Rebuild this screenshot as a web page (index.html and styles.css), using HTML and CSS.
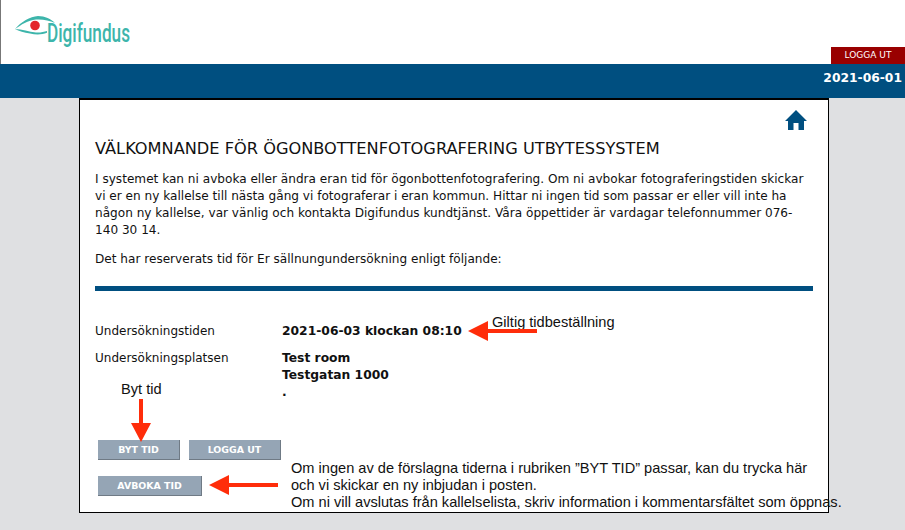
FILE: index.html
```html
<!DOCTYPE html>
<html lang="sv">
<head>
    <meta charset="UTF-8">
    <meta name="viewport" content="width=device-width, initial-scale=1.0">
    <title>Digifundus</title>
    <link rel="stylesheet" href="styles.css">
</head>
<body>
    <header class="top">
        <svg class="logo" width="180" height="50" viewBox="0 0 180 50">
            <path d="M15 29 C21 22 30 16.500 38 16 C45 16 51 19 55 23 C49 20.500 43 19 36 19.500 C28 20 21 25 15 29 Z" fill="#3db5ab"/>
            <path d="M15 29 C22 29 29 32 36 32.500 C40 32.800 44 32 47 31 L47 32.800 C42 34.800 36 35 30 33.500 C24 32.500 19 31 15 29 Z" fill="#3db5ab"/>
            <circle cx="35" cy="25.500" r="4.800" fill="#e3262b"/>
            <text class="logo-text" x="47" y="42" textLength="83" lengthAdjust="spacingAndGlyphs">Digifundus</text>
        </svg>
        <a class="logout" href="#">LOGGA UT</a>
    </header>

    <div class="datebar">2021-06-01</div>

    <main class="panel">
        <div class="home-row">
            <svg class="home" width="22" height="22" viewBox="0 0 22 22">
                <path d="M11 1 L22 12 H19 V21 H13.500 V14 H8.500 V21 H3 V12 H0 Z" fill="#004f80"/>
            </svg>
        </div>
        <h1>VÄLKOMNANDE FÖR ÖGONBOTTENFOTOGRAFERING UTBYTESSYSTEM</h1>
        <p class="intro">I systemet kan ni avboka eller ändra eran tid för ögonbottenfotografering. Om ni avbokar fotograferingstiden skickar vi er en ny kallelse till nästa gång vi fotograferar i eran kommun. Hittar ni ingen tid som passar er eller vill inte ha någon ny kallelse, var vänlig och kontakta Digifundus kundtjänst. Våra öppettider är vardagar telefonnummer 076-140 30 14.</p>
        <p class="intro">Det har reserverats tid för Er sällnungundersökning enligt följande:</p>
        <hr class="rule">

        <div class="info">
            <div class="info-label">Undersökningstiden</div>
            <div class="info-value">2021-06-03 klockan 08:10</div>
            <div class="info-label">Undersökningsplatsen</div>
            <div class="info-value">Test room<br>Testgatan 1000<br>.</div>
        </div>

        <div class="buttons">
            <div class="button-row">
                <button class="btn btn-byt">BYT TID</button>
                <button class="btn btn-logout">LOGGA UT</button>
            </div>
            <div class="button-row">
                <button class="btn btn-wide">AVBOKA TID</button>
            </div>
        </div>
    </main>

    <!-- anteckningar ovanpa skarmbilden -->
    <div class="note note-valid">Giltig tidbeställning</div>
    <div class="note note-byt">Byt tid</div>
    <div class="note note-long">Om ingen av de förslagna tiderna i rubriken ”BYT TID” passar, kan du trycka här<br>och vi skickar en ny inbjudan i posten.<br>Om ni vill avslutas från kallelselista, skriv information i kommentarsfältet som öppnas.</div>

    <svg class="arrows" width="905" height="530" viewBox="0 0 905 530">
        <g fill="#ff2d0a">
            <path d="M537 329 H488 V321 L468 331 L488 341 V333 H537 Z"/>
            <path d="M139 399 H143 V423 H151 L141 442 L131 423 H139 Z"/>
            <path d="M278 483 H229 V475 L209 485 L229 495 V487 H278 Z"/>
        </g>
    </svg>
</body>
</html>
```

FILE: styles.css
```css
html, body {
    margin: 0;
    height: 100%;
}

body {
    position: relative;
    width: 905px;
    height: 530px;
    overflow: hidden;
    background-color: #dfe0e2;
    font-family: "DejaVu Sans", Verdana, sans-serif;
    color: #111;
}

.top {
    height: 64px;
    background-color: #fff;
    border-left: 1px solid #777;
    display: flex;
    justify-content: space-between;
    align-items: flex-end;
}

.logo {
    display: block;
    align-self: flex-start;
    margin-left: -1px;
}

.logo-text {
    font-family: "Roboto", "Liberation Sans", sans-serif;
    font-weight: 500;
    font-size: 25px;
    fill: #3db5ab;
}

.logout {
    width: 74px;
    height: 17px;
    background-color: #990000;
    color: #fff;
    font-size: 9px;
    line-height: 17px;
    text-align: center;
    text-decoration: none;
}

.datebar {
    height: 34px;
    box-sizing: border-box;
    background-color: #004f80;
    color: #fff;
    font-size: 12.3px;
    font-weight: bold;
    line-height: 29px;
    text-align: right;
    padding-right: 3px;
}

.panel {
    width: 750px;
    height: 415px;
    margin-left: 79px;
    box-sizing: border-box;
    background-color: #fff;
    border: 1px solid #000;
    border-top-width: 2px;
    padding: 0 15px;
}

.home-row {
    display: flex;
    justify-content: flex-end;
    padding: 9px 6px 0 0;
    height: 23px;
}

.home {
    display: block;
}

h1 {
    font-size: 16.2px;
    font-weight: normal;
    line-height: 20px;
    margin: 7px 0 0;
}

.intro {
    font-size: 12.1px;
    line-height: 17px;
    margin: 12px 0 0;
}

.rule {
    height: 5px;
    border: 0;
    margin: 18px 0 0;
    background-color: #004f80;
}

.info {
    display: grid;
    grid-template-columns: 187px 1fr;
    row-gap: 10px;
    margin-top: 32px;
    font-size: 12px;
    line-height: 17px;
}

.info-value {
    font-size: 12.3px;
    font-weight: bold;
}

.buttons {
    margin: 39px 0 0 3px;
    display: flex;
    flex-direction: column;
    gap: 16px;
}

.button-row {
    display: flex;
    gap: 9px;
}

.btn {
    height: 20px;
    padding: 0;
    border: 0;
    border-right: 1px solid #6f7a85;
    border-bottom: 1px solid #6f7a85;
    background-color: #95a5b5;
    color: #fff;
    font-family: "DejaVu Sans", Verdana, sans-serif;
    font-size: 9.4px;
    font-weight: bold;
}

.btn-byt {
    width: 82px;
}

.btn-logout {
    width: 92px;
}

.btn-wide {
    width: 104px;
}

.note {
    position: absolute;
    font-family: "Liberation Sans", Arial, sans-serif;
    font-size: 14.6px;
    line-height: 17px;
    color: #111;
    white-space: nowrap;
}

.note-valid {
    left: 492px;
    top: 314px;
}

.note-byt {
    left: 121px;
    top: 381px;
}

.note-long {
    left: 291px;
    top: 460px;
}

.arrows {
    position: absolute;
    left: 0;
    top: 0;
    pointer-events: none;
}
```
